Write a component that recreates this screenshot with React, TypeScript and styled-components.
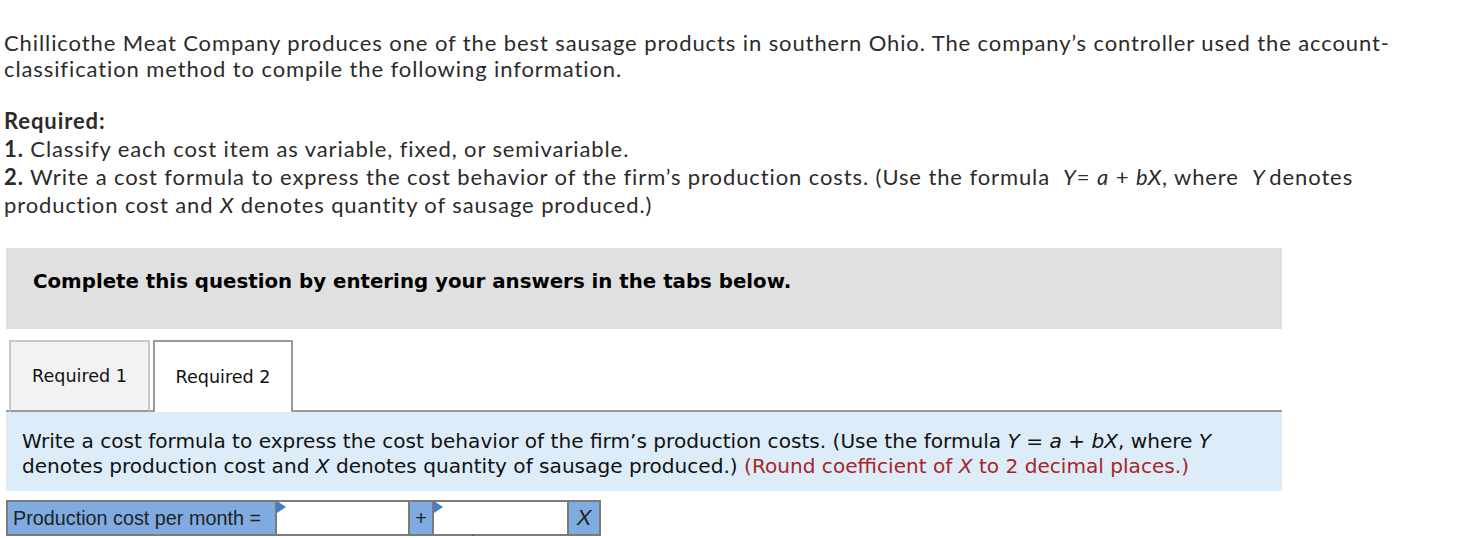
import React from "react";
import styled, { createGlobalStyle } from "styled-components";

const Global = createGlobalStyle`
  html, body { margin: 0; padding: 0; background: #fff; }
  body { font-family: "Lato", "Open Sans", sans-serif; color: #222; }
`;

const Page = styled.div`
  padding: 30px 0 0 4px;
  width: 1458px;
`;

const Intro = styled.p`
  margin: 0;
  font-size: 22px;
  letter-spacing: 0.9px;
  line-height: 26px;
  color: #2b2b2b;
`;

const Required = styled.div`
  margin-top: 25px;
  font-size: 22px;
  letter-spacing: 0.9px;
  line-height: 28px;
  color: #2b2b2b;
`;

const Var = styled.i`
  font-style: italic;
`;

const Panel = styled.div`
  margin: 29px 0 0 2px;
  width: 1276px;
`;

const Banner = styled.div`
  box-sizing: border-box;
  background: #e0e0e0;
  height: 81px;
  padding: 22px 0 0 27px;
  line-height: 24px;
  font-family: "DejaVu Sans", "Liberation Sans", sans-serif;
  font-weight: bold;
  font-size: 19.8px;
  color: #000;
`;

const TabRow = styled.div`
  display: flex;
  gap: 3px;
  margin-top: 11px;
  padding-left: 3px;
  border-bottom: 2px solid #9a9a9a;
  height: 70px;
  align-items: flex-end;
`;

const Tab = styled.div<{ active?: boolean }>`
  box-sizing: border-box;
  width: ${(p) => (p.active ? 140 : 141)}px;
  height: 72px;
  margin-bottom: -2px;
  display: flex;
  align-items: center;
  justify-content: center;
  font-family: "DejaVu Sans", "Liberation Sans", sans-serif;
  font-size: 17.6px;
  color: #111;
  background: ${(p) => (p.active ? "#fff" : "#f2f2f2")};
  border: 2px solid ${(p) => (p.active ? "#9a9a9a" : "#c8c8c8")};
  border-bottom: ${(p) => (p.active ? "none" : "2px solid #9a9a9a")};
`;

const Info = styled.div`
  background: #ddecf9;
  padding: 17px 16px 12px 16px;
  font-family: "DejaVu Sans", "Liberation Sans", sans-serif;
  font-size: 20.1px;
  line-height: 25px;
  color: #111;
`;

const Red = styled.span`
  color: #a8261f;
`;

const FormulaRow = styled.div`
  position: relative;
  display: inline-flex;
  margin-top: 9px;
  border: 2px solid #7b7b7b;
  font-family: "Liberation Sans", Arial, sans-serif;
  font-size: 19.8px;
  color: #222;
`;

const Cell = styled.div<{ w: number; blue?: boolean; center?: boolean; big?: boolean }>`
  position: relative;
  box-sizing: border-box;
  width: ${(p) => p.w}px;
  height: 32px;
  display: flex;
  align-items: center;
  justify-content: ${(p) => (p.center ? "center" : "flex-start")};
  padding-left: ${(p) => (p.center ? 0 : 5)}px;
  font-size: ${(p) => (p.big ? "22px" : "inherit")};
  background: ${(p) => (p.blue ? "#80abe0" : "#fff")};
  & + & {
    border-left: 2px solid #7b7b7b;
  }
`;

const Marker = styled.span`
  position: absolute;
  left: 0;
  top: -1px;
  width: 0;
  height: 0;
  border-top: 6px solid transparent;
  border-bottom: 6px solid transparent;
  border-left: 9px solid #3f7fcf;
`;

const Caret = styled.span`
  position: absolute;
  left: 463px;
  bottom: -4px;
  width: 0;
  height: 0;
  border-left: 2px solid transparent;
  border-right: 2px solid transparent;
  border-bottom: 3px solid #111;
`;

export default function App() {
  return (
    <>
      <Global />
      <Page>
        <Intro>
          Chillicothe Meat Company produces one of the best sausage products in southern Ohio. The
          company’s controller used the account-
          <br />
          classification method to compile the following information.
        </Intro>
        <Required>
          <b>Required:</b>
          <br />
          <b>1.</b> Classify each cost item as variable, fixed, or semivariable.
          <br />
          <b>2.</b> Write a cost formula to express the cost behavior of the firm’s production costs.
          (Use the formula&nbsp; <Var>Y</Var>= <Var>a</Var> + <Var>bX</Var>, where&nbsp;{" "}
          <Var>Y</Var>&thinsp;denotes
          <br />
          production cost and <Var>X</Var> denotes quantity of sausage produced.)
        </Required>
        <Panel>
          <Banner>Complete this question by entering your answers in the tabs below.</Banner>
          <TabRow>
            <Tab>Required 1</Tab>
            <Tab active>Required 2</Tab>
          </TabRow>
          <Info>
            Write a cost formula to express the cost behavior of the firm’s production costs. (Use
            the formula <Var>Y</Var> = <Var>a</Var> + <Var>bX</Var>, where <Var>Y</Var>
            <br />
            denotes production cost and <Var>X</Var> denotes quantity of sausage produced.){" "}
            <Red>
              (Round coefficient of <Var>X</Var> to 2 decimal places.)
            </Red>
          </Info>
          <FormulaRow>
            <Cell w={267} blue>
              Production cost per month =
            </Cell>
            <Cell w={133}>
              <Marker />
            </Cell>
            <Cell w={24} blue center>
              +
            </Cell>
            <Cell w={135}>
              <Marker />
            </Cell>
            <Cell w={32} blue center big>
              <Var>X</Var>
            </Cell>
            <Caret />
          </FormulaRow>
        </Panel>
      </Page>
    </>
  );
}
